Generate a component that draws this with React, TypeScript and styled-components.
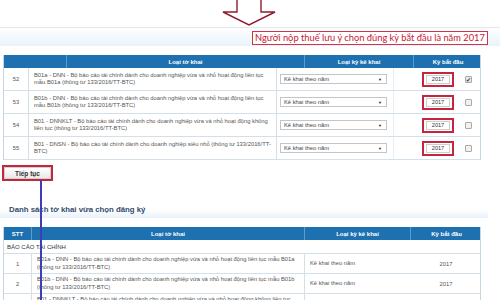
import React from "react";
import styled, { createGlobalStyle } from "styled-components";

type FormRow = {
  stt: number;
  name: string;
  year: string;
  checked: boolean;
};

type ListRow = {
  stt: number;
  name: string;
  period: string;
  year: string;
};

const formRows: FormRow[] = [
  {
    stt: 52,
    name: "B01a - DNN - Bộ báo cáo tài chính dành cho doanh nghiệp vừa và nhỏ hoạt động liên tục mẫu B01a (thông tư 133/2016/TT-BTC)",
    year: "2017",
    checked: true,
  },
  {
    stt: 53,
    name: "B01b - DNN - Bộ báo cáo tài chính dành cho doanh nghiệp vừa và nhỏ hoạt động liên tục mẫu B01b (thông tư 133/2016/TT-BTC)",
    year: "2017",
    checked: false,
  },
  {
    stt: 54,
    name: "B01 - DNNKLT - Bộ báo cáo tài chính dành cho doanh nghiệp vừa và nhỏ hoạt động không liên tục (thông tư 133/2016/TT-BTC)",
    year: "2017",
    checked: false,
  },
  {
    stt: 55,
    name: "B01 - DNSN - Bộ báo cáo tài chính dành cho doanh nghiệp siêu nhỏ (thông tư 133/2016/TT-BTC)",
    year: "2017",
    checked: false,
  },
];

const listRows: ListRow[] = [
  {
    stt: 1,
    name: "B01a - DNN - Bộ báo cáo tài chính dành cho doanh nghiệp vừa và nhỏ hoạt động liên tục mẫu B01a (thông tư 133/2016/TT-BTC)",
    period: "Kê khai theo năm",
    year: "2017",
  },
  {
    stt: 2,
    name: "B01b - DNN - Bộ báo cáo tài chính dành cho doanh nghiệp vừa và nhỏ hoạt động liên tục mẫu B01b (thông tư 133/2016/TT-BTC)",
    period: "Kê khai theo năm",
    year: "2017",
  },
  {
    stt: 3,
    name: "B01 - DNNKLT - Bộ báo cáo tài chính dành cho doanh nghiệp vừa và nhỏ hoạt động không liên tục (thông tư 133/2016/TT-BTC)",
    period: "Kê khai theo năm",
    year: "2017",
  },
];

const App: React.FC = () => {
  return (
    <Page>
      <GlobalStyle />
      <ArrowZone>
        <svg width="56" height="28" viewBox="0 0 56 28">
          <path
            d="M15 -2 L15 12 L1 12 L27 25 L53 12 L39 12 L39 -2"
            fill="#fff"
            stroke="#8e1d2f"
            strokeWidth="1.4"
            strokeLinejoin="miter"
          />
        </svg>
      </ArrowZone>

      <PanelHead>
        <Callout>Người nộp thuế lưu ý chọn đúng kỳ bắt đầu là năm 2017</Callout>
      </PanelHead>

      <Table>
        <HeadRow $cols="62px 238px 109px 69px">
          <HeadCell />
          <HeadCell>Loại tờ khai</HeadCell>
          <HeadCell>Loại kỳ kê khai</HeadCell>
          <HeadCell>Kỳ bắt đầu</HeadCell>
        </HeadRow>
        {formRows.map((r) => (
          <BodyRow key={r.stt} $cols="24px 248px 117px 89px" $h={23}>
            <NumCell>{r.stt}</NumCell>
            <TextCell>{r.name}</TextCell>
            <SelectCell>
              <FakeSelect>
                <span>Kê khai theo năm</span>
                <SelectArrow>▼</SelectArrow>
              </FakeSelect>
            </SelectCell>
            <YearCell>
              <RedFrame>
                <YearInput>{r.year}</YearInput>
              </RedFrame>
              <Check $checked={r.checked}>{r.checked ? "✔" : ""}</Check>
            </YearCell>
          </BodyRow>
        ))}
      </Table>

      <ButtonFrame>
        <NextButton>Tiếp tục</NextButton>
      </ButtonFrame>

      <SectionTitle>Danh sách tờ khai vừa chọn đăng ký</SectionTitle>

      <Table>
        <HeadRow $cols="27px 273px 106px 72px">
          <HeadCell>STT</HeadCell>
          <HeadCell>Loại tờ khai</HeadCell>
          <HeadCell>Loại kỳ kê khai</HeadCell>
          <HeadCell>Kỳ bắt đầu</HeadCell>
        </HeadRow>
        <GroupRow>BÁO CÁO TÀI CHÍNH</GroupRow>
        {listRows.map((r) => (
          <BodyRow key={r.stt} $cols="27px 273px 106px 72px" $h={20}>
            <NumCell>{r.stt}</NumCell>
            <TextCell>{r.name}</TextCell>
            <PlainCell>{r.period}</PlainCell>
            <NumCell>{r.year}</NumCell>
          </BodyRow>
        ))}
      </Table>

      <Pointer />
    </Page>
  );
};

const GlobalStyle = createGlobalStyle`
  html, body {
    margin: 0;
    padding: 0;
    background: #ffffff;
    overflow: hidden;
  }
  body {
    font-family: "Liberation Sans", Arial, sans-serif;
  }
`;

const Page = styled.div`
  position: relative;
  width: 500px;
  height: 300px;
  overflow: hidden;
  background: #ffffff;
`;

const ArrowZone = styled.div`
  height: 27px;
  padding-left: 222px;
  svg {
    display: block;
  }
`;

const PanelHead = styled.div`
  height: 18px;
  border-top: 1px solid #e3e8ee;
  background: linear-gradient(#ffffff, #e9f2fa);
  display: flex;
  align-items: flex-start;
  padding-left: 252px;
  margin-bottom: 9px;
`;

const Callout = styled.div`
  margin-top: 3px;
  height: 12px;
  padding: 0 2px;
  border: 1px solid #d0344a;
  background: #ffffff;
  color: #c8152f;
  font-family: Lato, "Liberation Sans", sans-serif;
  font-size: 9.3px;
  line-height: 12px;
  white-space: nowrap;
`;

const Table = styled.div`
  margin-left: 3px;
  width: 478px;
  border-left: 1px solid #c7d6e3;
  border-right: 1px solid #c7d6e3;
  box-sizing: border-box;
`;

const HeadRow = styled.div<{ $cols: string }>`
  display: grid;
  grid-template-columns: ${(p) => p.$cols};
  height: 13px;
  background: #1d71b0;
`;

const HeadCell = styled.div`
  display: flex;
  align-items: center;
  justify-content: center;
  color: #ffffff;
  font-size: 6px;
  font-weight: bold;
  border-left: 1px solid #5d9bcb;
  &:first-child {
    border-left: none;
  }
`;

const BodyRow = styled.div<{ $cols: string; $h: number }>`
  display: grid;
  grid-template-columns: ${(p) => p.$cols};
  height: ${(p) => p.$h}px;
  border-bottom: 1px solid #d3dfe9;
  box-sizing: border-box;
  color: #555;
  font-size: 5.8px;
`;

const NumCell = styled.div`
  display: flex;
  align-items: center;
  justify-content: center;
`;

const TextCell = styled.div`
  display: flex;
  align-items: center;
  padding: 0 5px;
  line-height: 7.5px;
  border-left: 1px solid #d3dfe9;
`;

const PlainCell = styled(TextCell)``;

const SelectCell = styled.div`
  display: flex;
  align-items: center;
  padding-left: 3px;
  border-left: 1px solid #d3dfe9;
`;

const FakeSelect = styled.div`
  width: 107px;
  height: 10px;
  box-sizing: border-box;
  border: 1px solid #c5c5c5;
  background: #ffffff;
  display: flex;
  align-items: center;
  justify-content: space-between;
  padding: 0 4px 0 3px;
  color: #444;
`;

const SelectArrow = styled.span`
  font-size: 4px;
  color: #222;
`;

const YearCell = styled.div`
  display: flex;
  align-items: center;
  padding-left: 28px;
  border-left: 1px solid #e6edf3;
`;

const RedFrame = styled.div`
  width: 32px;
  height: 15px;
  box-sizing: border-box;
  border: 2px solid #c3263d;
  display: flex;
  align-items: center;
  justify-content: center;
`;

const YearInput = styled.div`
  width: 24px;
  height: 9px;
  box-sizing: border-box;
  border: 1px solid #cfcfcf;
  display: flex;
  align-items: center;
  justify-content: center;
  font-size: 5.6px;
  color: #333;
`;

const Check = styled.div<{ $checked: boolean }>`
  margin-left: 11px;
  width: 7px;
  height: 7px;
  box-sizing: border-box;
  border: 1px solid #a9a9a9;
  border-radius: 1px;
  background: ${(p) => (p.$checked ? "#e8e8e8" : "#f1f1f1")};
  font-size: 6px;
  line-height: 6px;
  text-align: center;
  color: #333;
`;

const ButtonFrame = styled.div`
  margin: 5px 0 0 2px;
  width: 51px;
  height: 16px;
  box-sizing: border-box;
  border: 2px solid #c3263d;
  display: flex;
`;

const NextButton = styled.div`
  flex: 1;
  display: flex;
  align-items: center;
  justify-content: center;
  background: linear-gradient(#ffffff, #e9e9e9);
  border: 1px solid #d0d0d0;
  font-size: 6.5px;
  font-weight: bold;
  color: #333;
`;

const SectionTitle = styled.div`
  margin-top: 19px;
  height: 18px;
  padding-left: 9px;
  display: flex;
  align-items: center;
  background: linear-gradient(#ffffff 55%, #e8f1f9);
  width: 488px;
  box-sizing: border-box;
  color: #2f4d6c;
  font-size: 7.8px;
  font-weight: bold;
  margin-bottom: 9px;
`;

const GroupRow = styled.div`
  height: 13px;
  display: flex;
  align-items: center;
  padding-left: 3px;
  border-bottom: 1px solid #d3dfe9;
  font-size: 6px;
  color: #333;
`;

const Pointer = styled.div`
  position: absolute;
  left: 40px;
  top: 180px;
  width: 2px;
  height: 120px;
  background: #3d3db5;
`;

export default App;
